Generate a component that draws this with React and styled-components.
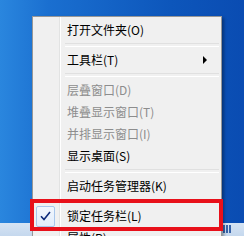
import React from "react";
import styled, { createGlobalStyle } from "styled-components";

const GlobalStyle = createGlobalStyle`
  html, body {
    margin: 0;
    padding: 0;
    background: #1666c8;
  }
  * {
    box-sizing: border-box;
  }
`;

const Desktop = styled.div`
  position: relative;
  width: 244px;
  height: 236px;
  overflow: hidden;
  display: flex;
  flex-direction: column;
  justify-content: flex-end;
  background: linear-gradient(90deg, #2a86de 0%, #1a6fd0 20%, #0d56bb 70%, #0a4cb2 100%);
  font-family: "Noto Sans CJK SC", "Microsoft YaHei", sans-serif;
`;

const Taskbar = styled.div`
  height: 13px;
  display: flex;
  justify-content: flex-end;
  align-items: flex-start;
  padding: 2px 12px 0 0;
  background: linear-gradient(180deg, #d6e4f3 0%, #c5d8ee 100%);
`;

const TrayIcon = styled.div`
  width: 9px;
  height: 8px;
  background: repeating-linear-gradient(90deg, #1d4f9e 0 2px, transparent 2px 3px);
  opacity: 0.85;
`;

const Menu = styled.div`
  position: absolute;
  left: 32px;
  top: 16px;
  width: 190px;
  padding: 2px;
  background-color: #f0f0f0;
  background-image: linear-gradient(
    90deg,
    transparent 26px,
    #e2e3e3 26px,
    #e2e3e3 27px,
    #ffffff 27px,
    #ffffff 28px,
    transparent 28px
  );
  border: 1px solid #979797;
  box-shadow: 2px 2px 3px rgba(0, 0, 0, 0.35);
`;

const Item = styled.div`
  position: relative;
  height: 22px;
  display: flex;
  align-items: center;
  font-size: 12px;
  color: ${(p) => (p.$disabled ? "#8d8d8d" : "#000")};
  white-space: nowrap;
`;

const IconCell = styled.div`
  width: 32px;
  height: 22px;
  flex: none;
  display: flex;
  align-items: center;
  padding-left: 1px;
`;

const CheckBox = styled.div`
  width: 19px;
  height: 21px;
  display: flex;
  align-items: center;
  justify-content: center;
  border: 1px solid #a8c6eb;
  border-radius: 2px;
  background: linear-gradient(180deg, #f1f6fd 0%, #e2edfb 100%);
  color: #0c2a7a;
`;

const Label = styled.span`
  flex: 1;
  line-height: 22px;
`;

const Arrow = styled.span`
  width: 0;
  height: 0;
  margin-right: 12px;
  border-top: 4px solid transparent;
  border-bottom: 4px solid transparent;
  border-left: 4px solid #000;
`;

const Separator = styled.div`
  height: 8px;
  margin-left: 30px;
  display: flex;
  align-items: center;

  &::before {
    content: "";
    flex: 1;
    height: 2px;
    border-top: 1px solid #e0e0e0;
    border-bottom: 1px solid #ffffff;
  }
`;

const Highlight = styled.div`
  position: absolute;
  left: -5px;
  right: -4px;
  top: -6px;
  bottom: -4px;
  border: 4px solid #e8101a;
  pointer-events: none;
`;

const Check = () => (
  <svg width="11" height="10" viewBox="0 0 11 10">
    <path d="M1 5.2 L4 8.5 L10 1" fill="none" stroke="currentColor" strokeWidth="1.6" />
  </svg>
);

const App = () => {
  return (
    <>
      <GlobalStyle />
      <Desktop>
        <Taskbar>
          <TrayIcon />
        </Taskbar>
        <Menu>
          <Item>
            <IconCell />
            <Label>打开文件夹(O)</Label>
          </Item>
          <Separator />
          <Item>
            <IconCell />
            <Label>工具栏(T)</Label>
            <Arrow />
          </Item>
          <Separator />
          <Item $disabled>
            <IconCell />
            <Label>层叠窗口(D)</Label>
          </Item>
          <Item $disabled>
            <IconCell />
            <Label>堆叠显示窗口(T)</Label>
          </Item>
          <Item $disabled>
            <IconCell />
            <Label>并排显示窗口(I)</Label>
          </Item>
          <Item>
            <IconCell />
            <Label>显示桌面(S)</Label>
          </Item>
          <Separator />
          <Item>
            <IconCell />
            <Label>启动任务管理器(K)</Label>
          </Item>
          <Separator />
          <Item>
            <IconCell>
              <CheckBox>
                <Check />
              </CheckBox>
            </IconCell>
            <Label>锁定任务栏(L)</Label>
            <Highlight />
          </Item>
          <Item>
            <IconCell />
            <Label>属性(R)</Label>
          </Item>
        </Menu>
      </Desktop>
    </>
  );
};

export default App;
